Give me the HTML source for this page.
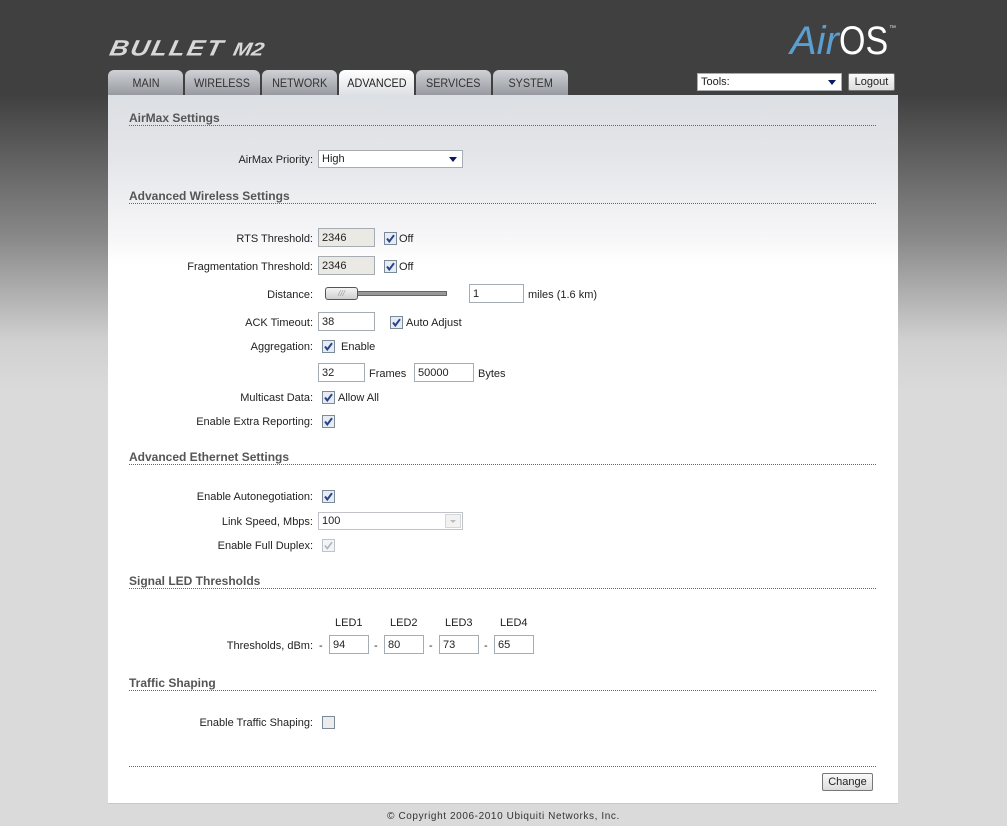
<!DOCTYPE html>
<html><head><meta charset="utf-8"><style>
*{margin:0;padding:0;box-sizing:border-box}
body{width:1007px;height:826px;position:relative;overflow:hidden;font-family:"Liberation Sans",sans-serif;font-size:11px;color:#222;
background:linear-gradient(#404040 0,#404040 95px,#8a8a8a 240px,#d0d0d0 340px,#dadada 390px,#dadada 826px)}
.a{position:absolute}
.panel{left:108px;top:95px;width:790px;height:709px;background:linear-gradient(#dcdfe3 0,#e4e5e9 60px,#f6f6f8 140px,#fff 170px,#fff);border-bottom:1px solid #c8c8c8}
.tab{top:70px;height:25px;width:75px;border-radius:6px 6px 0 0;background:linear-gradient(#cfd1d5,#979aa0);color:#333;font-size:12px;text-align:center;line-height:27px}
.tab span{display:inline-block;transform:scaleX(.9)}
.tab.act{background:linear-gradient(#fff,#dcdfe3);color:#222;height:26px}
.h{left:129px;font-weight:bold;font-size:12px;color:#555;line-height:14px}
.ln{left:129px;width:747px;border-top:1px dotted #666;height:1px}
.lb{right:694px;text-align:right;line-height:14px;color:#222}
.t{line-height:14px}
.in{background:#fff;border:1px solid #a5acb2;height:19px;padding-left:3px;line-height:19px}
.dis{background:#ebe9e4}
.cb{width:13px;height:13px}
.sel{background:#fff;border:1px solid #a5acb2;height:18px;padding-left:3px;line-height:17px}
.btn{border:1px solid #777;border-radius:2px;background:linear-gradient(#fbfbfb,#dcdcdc);text-align:center;line-height:17px;height:18px}
</style></head><body>
<svg width="0" height="0" style="position:absolute"><defs>
<symbol id="ck" viewBox="0 0 13 13"><rect x=".5" y=".5" width="12" height="12" fill="#e8ebf2" stroke="#7a8a99"/><path d="M3 6.5 L5.3 9.5 L10 3.2" fill="none" stroke="#26448c" stroke-width="2"/></symbol>
<symbol id="ckd" viewBox="0 0 13 13"><rect x=".5" y=".5" width="12" height="12" fill="#f4f4f4" stroke="#bcc4cc"/><path d="M3 6.5 L5.3 9.5 L10 3.2" fill="none" stroke="#aab4c8" stroke-width="1.6"/></symbol>
<symbol id="cke" viewBox="0 0 13 13"><rect x=".5" y=".5" width="12" height="12" fill="#ececec" stroke="#7a8a99"/></symbol>
</defs></svg>

<div class="a" style="left:110px;top:33px;font-size:26px;font-weight:bold;font-style:italic;color:#d8d8d8;letter-spacing:2px;transform:skewX(-12deg) scaleY(.85)">BULLET <span style="font-size:22px;letter-spacing:0">M2</span></div>
<div class="a" style="left:790px;top:20px;font-size:40px;line-height:42px;"><span style="font-style:italic;color:#5b9fd0">Air</span><span style="color:#fff;display:inline-block;transform:scaleX(.85);transform-origin:left">OS</span></div>
<div class="a" style="left:889px;top:25px;font-size:7px;color:#ddd">™</div>

<div class="a tab" style="left:108px"><span>MAIN</span></div>
<div class="a tab" style="left:185px"><span>WIRELESS</span></div>
<div class="a tab" style="left:262px"><span>NETWORK</span></div>
<div class="a tab" style="left:416px"><span>SERVICES</span></div>
<div class="a tab" style="left:493px"><span>SYSTEM</span></div>
<div class="a panel"></div>
<div class="a tab act" style="left:339px"><span>ADVANCED</span></div>

<div class="a sel" style="left:697px;top:73px;width:145px;height:18px">Tools:</div>
<div class="a" style="left:828px;top:80px;border-left:4px solid transparent;border-right:4px solid transparent;border-top:5px solid #0a1a60"></div>
<div class="a btn" style="left:848px;top:73px;width:47px">Logout</div>

<div class="a h" style="top:111px">AirMax Settings</div><div class="a ln" style="top:125px"></div>
<div class="a lb" style="top:153px">AirMax Priority:</div>
<div class="a sel" style="left:318px;top:150px;width:145px">High</div>
<div class="a" style="left:449px;top:157px;border-left:4px solid transparent;border-right:4px solid transparent;border-top:5px solid #0a1a60"></div>

<div class="a h" style="top:189px">Advanced Wireless Settings</div><div class="a ln" style="top:203px"></div>
<div class="a lb" style="top:232px">RTS Threshold:</div>
<div class="a in dis" style="left:318px;top:228px;width:57px">2346</div>
<svg class="a cb" style="left:384px;top:232px"><use href="#ck"/></svg><div class="a t" style="left:399px;top:232px">Off</div>
<div class="a lb" style="top:260px">Fragmentation Threshold:</div>
<div class="a in dis" style="left:318px;top:256px;width:57px">2346</div>
<svg class="a cb" style="left:384px;top:260px"><use href="#ck"/></svg><div class="a t" style="left:399px;top:260px">Off</div>
<div class="a lb" style="top:288px">Distance:</div>
<div class="a" style="left:356px;top:291px;width:91px;height:5px;background:#999;border:1px solid #666"></div>
<div class="a" style="left:325px;top:287px;width:33px;height:13px;border:1px solid #555;border-radius:3px;background:linear-gradient(#f4f4f4,#cfcfcf);font-size:8px;color:#999;text-align:center;line-height:11px;font-style:italic">///</div>
<div class="a in" style="left:469px;top:284px;width:55px">1</div>
<div class="a t" style="left:528px;top:288px">miles (1.6 km)</div>
<div class="a lb" style="top:316px">ACK Timeout:</div>
<div class="a in" style="left:318px;top:312px;width:57px">38</div>
<svg class="a cb" style="left:390px;top:316px"><use href="#ck"/></svg><div class="a t" style="left:406px;top:316px">Auto Adjust</div>
<div class="a lb" style="top:340px">Aggregation:</div>
<svg class="a cb" style="left:322px;top:340px"><use href="#ck"/></svg><div class="a t" style="left:341px;top:340px">Enable</div>
<div class="a in" style="left:318px;top:363px;width:47px">32</div><div class="a t" style="left:369px;top:367px">Frames</div>
<div class="a in" style="left:414px;top:363px;width:60px">50000</div><div class="a t" style="left:478px;top:367px">Bytes</div>
<div class="a lb" style="top:391px">Multicast Data:</div>
<svg class="a cb" style="left:322px;top:391px"><use href="#ck"/></svg><div class="a t" style="left:338px;top:391px">Allow All</div>
<div class="a lb" style="top:415px">Enable Extra Reporting:</div>
<svg class="a cb" style="left:322px;top:415px"><use href="#ck"/></svg>

<div class="a h" style="top:450px">Advanced Ethernet Settings</div><div class="a ln" style="top:464px"></div>
<div class="a lb" style="top:490px">Enable Autonegotiation:</div>
<svg class="a cb" style="left:322px;top:490px"><use href="#ck"/></svg>
<div class="a lb" style="top:515px">Link Speed, Mbps:</div>
<div class="a sel" style="left:318px;top:512px;width:145px;border-color:#c0c4c8">100</div>
<div class="a" style="left:445px;top:514px;width:16px;height:14px;border:1px solid #d4d6d8;background:#f2f2f2"></div>
<div class="a" style="left:450px;top:520px;border-left:3px solid transparent;border-right:3px solid transparent;border-top:3px solid #bbb"></div>
<div class="a lb" style="top:539px">Enable Full Duplex:</div>
<svg class="a cb" style="left:322px;top:539px"><use href="#ckd"/></svg>

<div class="a h" style="top:574px">Signal LED Thresholds</div><div class="a ln" style="top:588px"></div>
<div class="a t" style="left:335px;top:616px">LED1</div>
<div class="a t" style="left:390px;top:616px">LED2</div>
<div class="a t" style="left:445px;top:616px">LED3</div>
<div class="a t" style="left:500px;top:616px">LED4</div>
<div class="a lb" style="top:639px">Thresholds, dBm:</div>
<div class="a t" style="left:319px;top:639px">-</div><div class="a in" style="left:329px;top:635px;width:40px">94</div>
<div class="a t" style="left:374px;top:639px">-</div><div class="a in" style="left:384px;top:635px;width:40px">80</div>
<div class="a t" style="left:429px;top:639px">-</div><div class="a in" style="left:439px;top:635px;width:40px">73</div>
<div class="a t" style="left:484px;top:639px">-</div><div class="a in" style="left:494px;top:635px;width:40px">65</div>

<div class="a h" style="top:676px">Traffic Shaping</div><div class="a ln" style="top:690px"></div>
<div class="a lb" style="top:716px">Enable Traffic Shaping:</div>
<svg class="a cb" style="left:322px;top:716px"><use href="#cke"/></svg>

<div class="a ln" style="top:766px"></div>
<div class="a btn" style="left:822px;top:773px;width:51px;font-size:11px">Change</div>

<div class="a" style="left:0;width:1007px;top:811px;text-align:center;font-size:10px;color:#333;letter-spacing:.6px">© Copyright 2006-2010 Ubiquiti Networks, Inc.</div>
</body></html>
